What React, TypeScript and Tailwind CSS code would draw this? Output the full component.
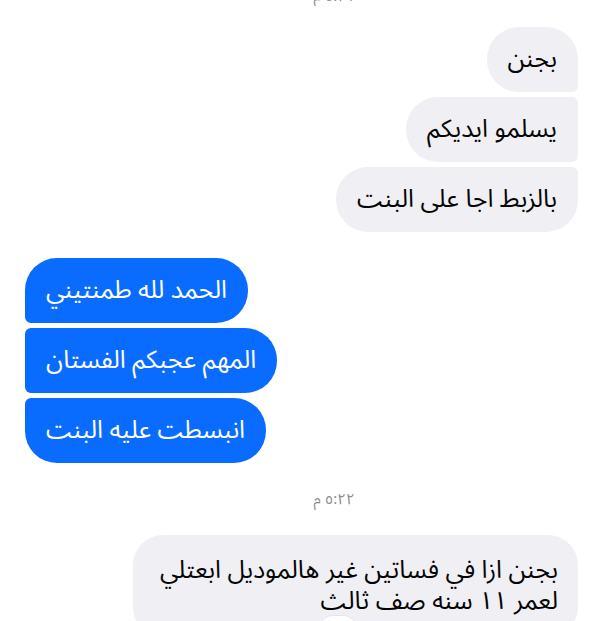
const font = { fontFamily: '"Noto Sans Arabic", "Noto Sans", "DejaVu Sans", sans-serif' };

type Pos = "first" | "middle" | "last" | "single";

function grayRadius(pos: Pos) {
  if (pos === "first") return "rounded-[32px] rounded-br-[6px]";
  if (pos === "middle") return "rounded-[32px] rounded-tr-[6px] rounded-br-[6px]";
  if (pos === "last") return "rounded-[32px] rounded-tr-[6px]";
  return "rounded-[32px]";
}

function blueRadius(pos: Pos) {
  if (pos === "first") return "rounded-[32px] rounded-bl-[6px]";
  if (pos === "middle") return "rounded-[32px] rounded-tl-[6px] rounded-bl-[6px]";
  if (pos === "last") return "rounded-[32px] rounded-tl-[6px]";
  return "rounded-[32px]";
}

function Timestamp({ text }: { text: string }) {
  return (
    <div className="flex justify-center pl-[68px] text-[15px] leading-[20px] text-[#8a8d91]" dir="rtl">
      {text}
    </div>
  );
}

export default function App() {
  const gray = [
    { text: "بجنن", pos: "first" as Pos },
    { text: "يسلمو ايديكم", pos: "middle" as Pos },
    { text: "بالزبط اجا على البنت", pos: "last" as Pos },
  ];
  const blue = [
    { text: "الحمد لله طمنتيني", pos: "first" as Pos },
    { text: "المهم عجبكم الفستان", pos: "middle" as Pos },
    { text: "انبسطت عليه البنت", pos: "last" as Pos },
  ];

  return (
    <div className="w-[600px] h-[621px] overflow-hidden bg-white" style={font}>
      {/* clipped timestamp at the very top */}
      <div className="h-[6px] overflow-hidden">
        <div className="-mt-[14px]">
          <Timestamp text="٥:٢١ م" />
        </div>
      </div>

      {/* incoming group */}
      <div className="flex flex-col items-end gap-[5px] pr-[22px] mt-[21px]">
        {gray.map((m) => (
          <div
            key={m.text}
            dir="rtl"
            className={`h-[65px] flex items-center px-[21px] bg-[#f0f0f4] text-[#050505] text-[25px] ${grayRadius(m.pos)}`}
          >
            {m.text}
          </div>
        ))}
      </div>

      {/* outgoing group */}
      <div className="flex flex-col items-start gap-[5px] pl-[25px] mt-[26px]">
        {blue.map((m) => (
          <div
            key={m.text}
            dir="rtl"
            className={`h-[65px] flex items-center px-[21px] bg-[#0a6cff] text-white text-[25px] ${blueRadius(m.pos)}`}
          >
            {m.text}
          </div>
        ))}
      </div>

      <div className="mt-[26px]">
        <Timestamp text="٥:٢٢ م" />
      </div>

      {/* last incoming message */}
      <div className="flex justify-end pr-[22px] mt-[26px]">
        <div className="relative">
          <div
            dir="rtl"
            className="w-[445px] bg-[#f0f0f4] text-[#050505] text-[25px] leading-[31px] rounded-[30px] px-[20px] pt-[20px] pb-[20px]"
          >
            بجنن ازا في فساتين غير هالموديل ابعتلي
            <br />
            لعمر ١١ سنه صف ثالث
          </div>
          <div className="absolute left-[187px] top-[80px] w-[36px] h-[24px] rounded-full bg-white border border-[#e4e6eb]" />
        </div>
      </div>
    </div>
  );
}
